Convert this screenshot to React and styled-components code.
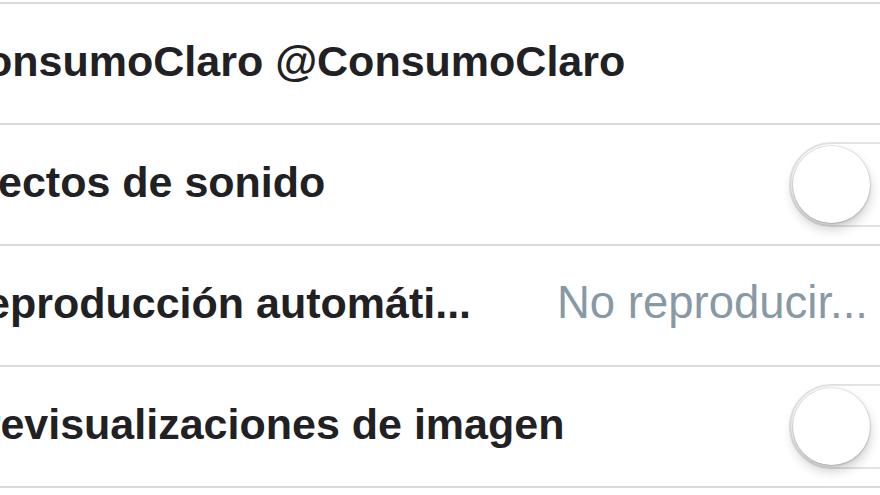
import styled, { createGlobalStyle } from "styled-components";

const GlobalStyle = createGlobalStyle`
  html, body {
    margin: 0;
    padding: 0;
    background: #ffffff;
  }
  body {
    font-family: "Liberation Sans", Arial, sans-serif;
  }
`;

const Screen = styled.div`
  width: 880px;
  height: 495px;
  overflow: hidden;
  background: #ffffff;
`;

const List = styled.div`
  width: 1067px;
  margin: 2px 0 0 -90px;
  border-top: 2px solid #dadada;
`;

const Row = styled.div`
  display: flex;
  align-items: center;
  justify-content: space-between;
  box-sizing: border-box;
  height: 121px;
  padding: 0 45px 5px 45px;
  border-bottom: 2px solid #dadada;
`;

const Title = styled.div`
  font-size: 43px;
  font-weight: 700;
  color: #1f2124;
  white-space: nowrap;
`;

const Value = styled.div`
  font-size: 45.5px;
  font-weight: 400;
  color: #8899a6;
  white-space: nowrap;
  margin-right: 64px;
`;

const Track = styled.div`
  display: flex;
  align-items: center;
  box-sizing: border-box;
  width: 143px;
  height: 85px;
  margin-top: 5px;
  padding: 0 2px;
  border: 2px solid #e3e3e3;
  border-radius: 43px;
  background: #ffffff;
  justify-content: ${(p) => (p.on ? "flex-end" : "flex-start")};
`;

const Knob = styled.div`
  width: 77px;
  height: 77px;
  border-radius: 50%;
  background: #ffffff;
  box-shadow: 0 0 0 1px rgba(0, 0, 0, 0.07), 0 6px 12px rgba(0, 0, 0, 0.2),
    0 1px 3px rgba(0, 0, 0, 0.15);
`;

function Switch({ on }) {
  return (
    <Track on={on ? 1 : 0}>
      <Knob />
    </Track>
  );
}

function App() {
  return (
    <Screen>
      <GlobalStyle />
      <List>
        <Row>
          <Title>ConsumoClaro @ConsumoClaro</Title>
        </Row>
        <Row>
          <Title>Efectos de sonido</Title>
          <Switch />
        </Row>
        <Row>
          <Title>Reproducción automáti...</Title>
          <Value>No reproducir...</Value>
        </Row>
        <Row>
          <Title>Previsualizaciones de imagen</Title>
          <Switch />
        </Row>
      </List>
    </Screen>
  );
}

export default App;
